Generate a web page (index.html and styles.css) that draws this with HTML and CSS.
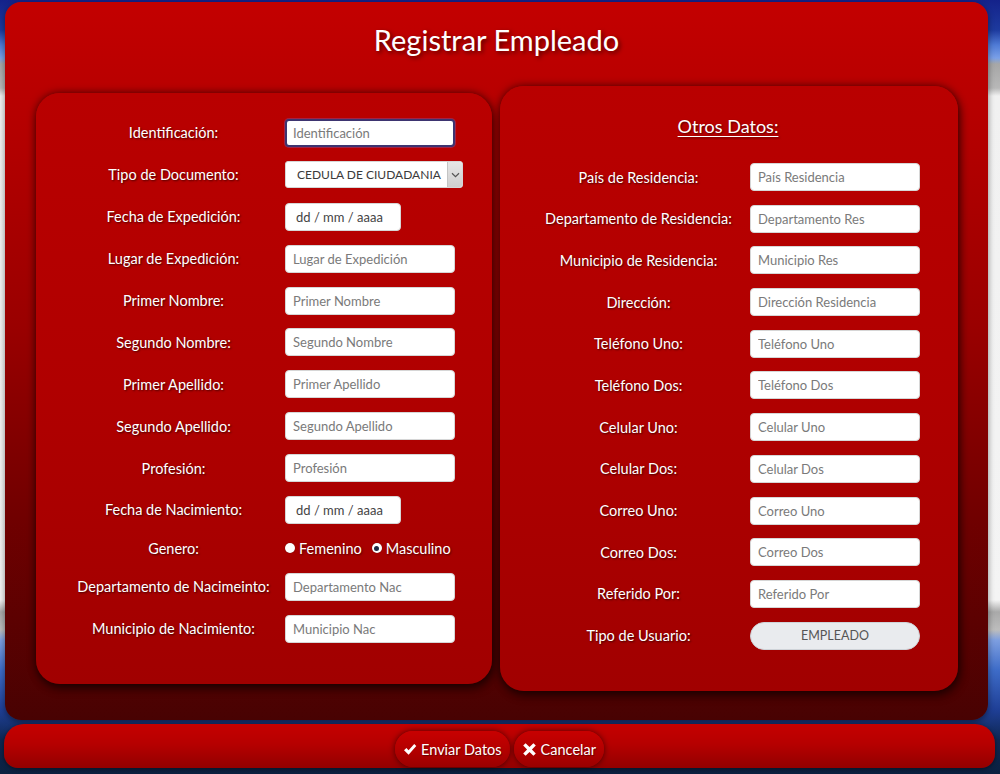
FILE: index.html
```html
<!DOCTYPE html>
<html lang="es">
<head>
<meta charset="utf-8">
<title>Registrar Empleado</title>
<link rel="stylesheet" href="styles.css">
</head>
<body>
<div class="page">
  <div class="card">
    <h1 class="title">Registrar Empleado</h1>
    <div class="panels">
      <section class="panel panel-left">
        <div class="form-grid grid-left">
          <label class="lbl">Identificación:</label>
          <div class="ctl"><input class="inp inp-focus" type="text" placeholder="Identificación"></div>

          <label class="lbl">Tipo de Documento:</label>
          <div class="ctl">
            <div class="select">
              <span class="select-text">CEDULA DE CIUDADANIA</span>
              <span class="select-arrow"><svg width="9" height="6" viewBox="0 0 9 6"><path d="M1 1.2 L4.5 4.6 L8 1.2" fill="none" stroke="#555" stroke-width="1.2"/></svg></span>
            </div>
          </div>

          <label class="lbl">Fecha de Expedición:</label>
          <div class="ctl"><input class="inp inp-date" type="text" placeholder="dd / mm / aaaa"></div>

          <label class="lbl">Lugar de Expedición:</label>
          <div class="ctl"><input class="inp" type="text" placeholder="Lugar de Expedición"></div>

          <label class="lbl">Primer Nombre:</label>
          <div class="ctl"><input class="inp" type="text" placeholder="Primer Nombre"></div>

          <label class="lbl">Segundo Nombre:</label>
          <div class="ctl"><input class="inp" type="text" placeholder="Segundo Nombre"></div>

          <label class="lbl">Primer Apellido:</label>
          <div class="ctl"><input class="inp" type="text" placeholder="Primer Apellido"></div>

          <label class="lbl">Segundo Apellido:</label>
          <div class="ctl"><input class="inp" type="text" placeholder="Segundo Apellido"></div>

          <label class="lbl">Profesión:</label>
          <div class="ctl"><input class="inp" type="text" placeholder="Profesión"></div>

          <label class="lbl">Fecha de Nacimiento:</label>
          <div class="ctl"><input class="inp inp-date" type="text" placeholder="dd / mm / aaaa"></div>

          <label class="lbl lbl-short">Genero:</label>
          <div class="ctl radios">
            <span class="radio"><span class="dot"></span>Femenino</span>
            <span class="radio"><span class="dot dot-on"></span>Masculino</span>
          </div>

          <label class="lbl">Departamento de Nacimeinto:</label>
          <div class="ctl"><input class="inp" type="text" placeholder="Departamento Nac"></div>

          <label class="lbl">Municipio de Nacimiento:</label>
          <div class="ctl"><input class="inp" type="text" placeholder="Municipio Nac"></div>
        </div>
      </section>

      <section class="panel panel-right">
        <h2 class="subtitle">Otros Datos:</h2>
        <div class="form-grid grid-right">
          <label class="lbl">País de Residencia:</label>
          <div class="ctl"><input class="inp" type="text" placeholder="País Residencia"></div>

          <label class="lbl">Departamento de Residencia:</label>
          <div class="ctl"><input class="inp" type="text" placeholder="Departamento Res"></div>

          <label class="lbl">Municipio de Residencia:</label>
          <div class="ctl"><input class="inp" type="text" placeholder="Municipio Res"></div>

          <label class="lbl">Dirección:</label>
          <div class="ctl"><input class="inp" type="text" placeholder="Dirección Residencia"></div>

          <label class="lbl">Teléfono Uno:</label>
          <div class="ctl"><input class="inp" type="text" placeholder="Teléfono Uno"></div>

          <label class="lbl">Teléfono Dos:</label>
          <div class="ctl"><input class="inp" type="text" placeholder="Teléfono Dos"></div>

          <label class="lbl">Celular Uno:</label>
          <div class="ctl"><input class="inp" type="text" placeholder="Celular Uno"></div>

          <label class="lbl">Celular Dos:</label>
          <div class="ctl"><input class="inp" type="text" placeholder="Celular Dos"></div>

          <label class="lbl">Correo Uno:</label>
          <div class="ctl"><input class="inp" type="text" placeholder="Correo Uno"></div>

          <label class="lbl">Correo Dos:</label>
          <div class="ctl"><input class="inp" type="text" placeholder="Correo Dos"></div>

          <label class="lbl">Referido Por:</label>
          <div class="ctl"><input class="inp" type="text" placeholder="Referido Por"></div>

          <label class="lbl">Tipo de Usuario:</label>
          <div class="ctl"><div class="pill">EMPLEADO</div></div>
        </div>
      </section>
    </div>
  </div>

  <div class="actions">
    <button class="btn" type="button">
      <svg class="ico" width="14" height="13" viewBox="0 0 14 13"><path d="M1 7.2 L3.4 4.9 L5.6 7.3 L11.2 1 L13.3 3.1 L5.6 11.8 Z" fill="#fff"/></svg>
      Enviar Datos
    </button>
    <button class="btn" type="button">
      <svg class="ico" width="15" height="15" viewBox="0 0 15 15"><path d="M1.2 3.6 L3.6 1.2 L7.5 5.1 L11.4 1.2 L13.8 3.6 L9.9 7.5 L13.8 11.4 L11.4 13.8 L7.5 9.9 L3.6 13.8 L1.2 11.4 L5.1 7.5 Z" fill="#fff"/></svg>
      Cancelar
    </button>
  </div>
</div>
</body>
</html>
```

FILE: styles.css
```css
* { box-sizing: border-box; }

html, body {
  margin: 0;
  padding: 0;
}

body {
  width: 1000px;
  height: 774px;
  overflow: hidden;
  font-family: "Lato", "Open Sans", sans-serif;
  background: linear-gradient(to bottom,
    #14228a 0px, #1d3a9e 30px, #4f7bd6 45px, #7aa0e8 58px,
    #a7a7a7 64px, #b8b8b8 88px, #f1f1f1 96px,
    #f4f4f4 600px, #a9a9a9 612px, #bdbdbd 630px,
    #7e9fe0 640px, #3e6cc8 670px, #1f3f96 710px,
    #0e2752 740px, #0b2140 774px);
}

.page {
  display: flex;
  flex-direction: column;
}

.card {
  margin: 2px 0 0 5px;
  width: 983px;
  height: 718px;
  border-radius: 16px;
  background: linear-gradient(to bottom, #c30000 0%, #b40000 18%, #9a0000 45%, #700000 72%, #480202 100%);
  box-shadow: 0 2px 6px rgba(0, 0, 0, 0.45);
  display: flex;
  flex-direction: column;
}

.title {
  margin: 16px 0 24px;
  line-height: 44px;
  height: 44px;
  font-size: 29px;
  font-weight: 400;
  color: #fff;
  text-align: center;
  text-shadow: 2px 2px 4px rgba(0, 0, 0, 0.55);
}

.panels {
  display: flex;
  align-items: center;
  gap: 8px;
  padding: 0 30px 0 31px;
}

.panel {
  border-radius: 24px;
  background: linear-gradient(to bottom, #b90000 0%, #b00000 50%, #a10000 100%);
  box-shadow: 0 0 9px rgba(0, 0, 0, 0.55), 2px 5px 10px rgba(0, 0, 0, 0.45);
}

.panel-left {
  width: 456px;
  padding: 26px 0 41px 26px;
}

.panel-right {
  width: 458px;
  padding: 26px 0 41px 27px;
}

.subtitle {
  margin: 0 0 23px;
  line-height: 28px;
  font-size: 18px;
  font-weight: 400;
  color: #fff;
  text-align: center;
  width: 402px;
  text-decoration: underline;
  text-underline-offset: 3px;
  text-decoration-thickness: 1px;
  text-shadow: 1px 1px 2px rgba(0, 0, 0, 0.55);
}

.form-grid {
  display: grid;
  grid-template-columns: 223px 180px;
  align-items: center;
}

.grid-left { row-gap: 13.9px; }
.grid-right { row-gap: 13.7px; }

.lbl {
  text-align: center;
  color: #fff;
  font-size: 14.5px;
  line-height: 20px;
  padding-top: 1px;
  text-shadow: 1px 1px 2px rgba(0, 0, 0, 0.6);
}

.ctl {
  display: flex;
  align-items: center;
  height: 28px;
}

.inp {
  width: 170px;
  height: 28px;
  margin: 0;
  padding: 0 7px;
  border: 1px solid #d6d6d6;
  border-radius: 4px;
  background: #fff;
  font-family: "Lato", "Open Sans", sans-serif;
  font-size: 13px;
  color: #333;
  outline: none;
}

.inp::placeholder { color: #7a7a7a; }

.inp-focus {
  border: 2px solid #3d3470;
  box-shadow: 0 0 0 1px rgba(120, 100, 200, 0.35);
  padding-left: 6px;
}

.inp-date { width: 116px; padding-left: 10px; }
.inp-date::placeholder { color: #444; }

.select {
  width: 178px;
  height: 27px;
  display: flex;
  align-items: stretch;
  background: #fff;
  border: 1px solid #d6d6d6;
  border-radius: 3px;
  overflow: hidden;
}

.select-text {
  flex: 1;
  display: flex;
  align-items: center;
  padding-left: 11px;
  font-size: 12px;
  color: #3a3a3a;
  white-space: nowrap;
}

.select-arrow {
  width: 15px;
  flex: none;
  display: flex;
  align-items: center;
  justify-content: center;
  background: linear-gradient(to bottom, #e6e6e6, #cfcfcf);
  border-left: 1px solid #c4c4c4;
}

.radios {
  height: 21px;
  gap: 10px;
}

.radio {
  display: flex;
  align-items: center;
  gap: 4px;
  color: #fff;
  font-size: 14.5px;
  text-shadow: 1px 1px 2px rgba(0, 0, 0, 0.5);
}

.dot {
  width: 10px;
  height: 10px;
  border-radius: 50%;
  background: #fff;
  box-shadow: 0 0 1px rgba(0, 0, 0, 0.5);
  display: flex;
  align-items: center;
  justify-content: center;
}

.dot-on::after {
  content: "";
  width: 5px;
  height: 5px;
  border-radius: 50%;
  background: #1e2a44;
}

.pill {
  width: 170px;
  height: 28px;
  border-radius: 14px;
  background: #e9ebee;
  border: 1px solid #cfd3d8;
  color: #555;
  font-size: 12.5px;
  display: flex;
  align-items: center;
  justify-content: center;
}

.actions {
  margin: 4px 0 0 4px;
  width: 991px;
  height: 44px;
  border-radius: 20px 20px 14px 14px;
  background: linear-gradient(to bottom, #c50000 0%, #b60000 45%, #930000 100%);
  box-shadow: 0 1px 4px rgba(0, 0, 0, 0.5);
  display: flex;
  justify-content: center;
  align-items: flex-start;
  gap: 4px;
  padding-top: 7px;
}

.btn {
  height: 36px;
  border: none;
  border-radius: 18px;
  padding: 0 8px;
  display: flex;
  align-items: center;
  gap: 4px;
  background: linear-gradient(to bottom, #c80000 0%, #b00000 60%, #9a0000 100%);
  box-shadow: 0 0 6px rgba(0, 0, 0, 0.6);
  color: #fff;
  font-family: "Lato", "Open Sans", sans-serif;
  font-size: 14.5px;
  cursor: pointer;
  text-shadow: 1px 1px 1px rgba(0, 0, 0, 0.4);
}

.ico { flex: none; }
```
